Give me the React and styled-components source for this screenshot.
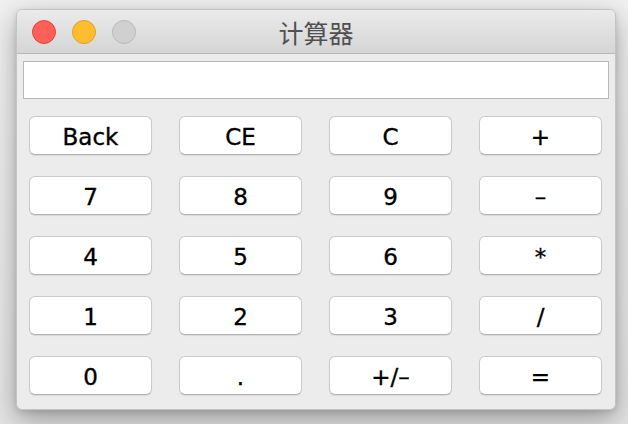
import React from "react";
import styled, { createGlobalStyle } from "styled-components";

const Global = createGlobalStyle`
  html, body { margin: 0; padding: 0; }
  body {
    width: 628px;
    height: 424px;
    overflow: hidden;
    background: #e9e9e9;
    font-family: "DejaVu Sans", "Noto Sans CJK SC", sans-serif;
  }
`;

const Desktop = styled.div`
  width: 628px;
  height: 424px;
  box-sizing: border-box;
  padding: 9px 12px 0 16px;
  background: linear-gradient(#f0f0f0, #e4e4e4);
`;

const Window = styled.div`
  width: 600px;
  height: 401px;
  box-sizing: border-box;
  border-radius: 6px;
  background: #ececec;
  border: 1px solid #c4c4c4;
  box-shadow: 0 10px 28px rgba(0, 0, 0, 0.32), 0 2px 6px rgba(0, 0, 0, 0.12);
  overflow: hidden;
  display: flex;
  flex-direction: column;
`;

const TitleBar = styled.div`
  height: 44px;
  flex: none;
  box-sizing: border-box;
  border-bottom: 1px solid #b7b7b7;
  background: linear-gradient(#ebebeb, #d5d5d5);
  display: flex;
  align-items: center;
  position: relative;
  padding-left: 15px;
  gap: 16px;
`;

const Light = styled.span`
  width: 24px;
  height: 24px;
  box-sizing: border-box;
  border-radius: 50%;
  background: ${(p) => p.$bg};
  border: 1px solid ${(p) => p.$bd};
`;

const Title = styled.div`
  position: absolute;
  left: 0;
  right: 0;
  top: 1px;
  bottom: 0;
  display: flex;
  align-items: center;
  justify-content: center;
  font-family: "Noto Sans CJK SC", sans-serif;
  font-size: 25px;
  color: #505050;
  pointer-events: none;
`;

const Content = styled.div`
  flex: 1;
  display: flex;
  flex-direction: column;
  padding: 7px 6px 0 6px;
`;

const Display = styled.input`
  height: 38px;
  box-sizing: border-box;
  border: 1px solid #b8b8b8;
  background: #fff;
  outline: none;
  margin: 0;
  padding: 0 6px;
  font-size: 20px;
`;

const Grid = styled.div`
  display: grid;
  grid-template-columns: repeat(4, 123px);
  grid-auto-rows: 39px;
  column-gap: 27px;
  row-gap: 21px;
  margin-top: 17px;
  padding-left: 6px;
`;

const Key = styled.button`
  box-sizing: border-box;
  margin: 0;
  padding: 3px 0 0 0;
  background: #fff;
  border: 1px solid #cacaca;
  border-bottom-color: #b3b3b3;
  border-radius: 6px;
  box-shadow: 0 1px 1px rgba(0, 0, 0, 0.08);
  font-family: "DejaVu Sans", sans-serif;
  font-size: 23px;
  -webkit-text-stroke: 0.35px #000;
  color: #000;
  display: flex;
  align-items: center;
  justify-content: center;
  line-height: 1;
`;

const keys = [
  "Back", "CE", "C", "+",
  "7", "8", "9", "–",
  "4", "5", "6", "*",
  "1", "2", "3", "/",
  "0", ".", "+/–", "=",
];

export default function App() {
  return (
    <>
      <Global />
      <Desktop>
        <Window>
          <TitleBar>
            <Light $bg="#fe5f57" $bd="#e2463f" />
            <Light $bg="#febc2e" $bd="#dfa123" />
            <Light $bg="#d0d0d0" $bd="#b9b9b9" />
            <Title>计算器</Title>
          </TitleBar>
          <Content>
            <Display readOnly />
            <Grid>
              {keys.map((k) => (
                <Key key={k}>{k}</Key>
              ))}
            </Grid>
          </Content>
        </Window>
      </Desktop>
    </>
  );
}
